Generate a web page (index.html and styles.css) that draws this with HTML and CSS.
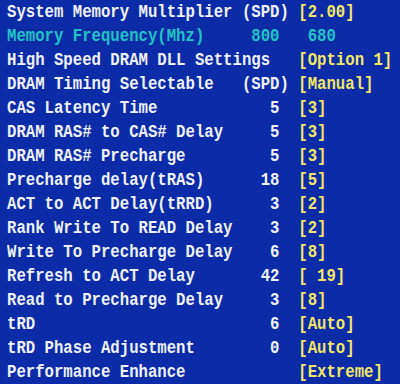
FILE: index.html
```html
<!DOCTYPE html>
<html>
<head>
<meta charset="utf-8">
<link rel="stylesheet" href="styles.css">
</head>
<body>
<div class="screen">
<div class="row">System Memory Multiplier (SPD) <span class="val">[2.00]</span></div>
<div class="row info">Memory Frequency(Mhz)     800   680</div>
<div class="row">High Speed DRAM DLL Settings   <span class="val">[Option 1]</span></div>
<div class="row">DRAM Timing Selectable   (SPD) <span class="val">[Manual]</span></div>
<div class="row">CAS Latency Time            5  <span class="val">[3]</span></div>
<div class="row">DRAM RAS# to CAS# Delay     5  <span class="val">[3]</span></div>
<div class="row">DRAM RAS# Precharge         5  <span class="val">[3]</span></div>
<div class="row">Precharge delay(tRAS)      18  <span class="val">[5]</span></div>
<div class="row">ACT to ACT Delay(tRRD)      3  <span class="val">[2]</span></div>
<div class="row">Rank Write To READ Delay    3  <span class="val">[2]</span></div>
<div class="row">Write To Precharge Delay    6  <span class="val">[8]</span></div>
<div class="row">Refresh to ACT Delay       42  <span class="val">[ 19]</span></div>
<div class="row">Read to Precharge Delay     3  <span class="val">[8]</span></div>
<div class="row">tRD                         6  <span class="val">[Auto]</span></div>
<div class="row">tRD Phase Adjustment        0  <span class="val">[Auto]</span></div>
<div class="row">Performance Enhance            <span class="val">[Extreme]</span></div>
</div>
</body>
</html>
```
FILE: styles.css
```css
html, body {
  margin: 0;
  padding: 0;
  background: #0b2ca6;
}
.screen {
  width: 400px;
  height: 384px;
  overflow: hidden;
  background: #0b2ca6;
  padding: 0 0 0 7px;
  box-sizing: border-box;
  font-family: "Liberation Mono", monospace;
  font-weight: bold;
  font-size: 15.67px;
  color: #eef2ff;
}
.row {
  height: 24px;
  line-height: 24px;
  white-space: pre;
  transform: scaleY(1.22);
  transform-origin: 0 50%;
}
.info {
  color: #22c2c6;
}
.val {
  color: #f2e66a;
}
```
